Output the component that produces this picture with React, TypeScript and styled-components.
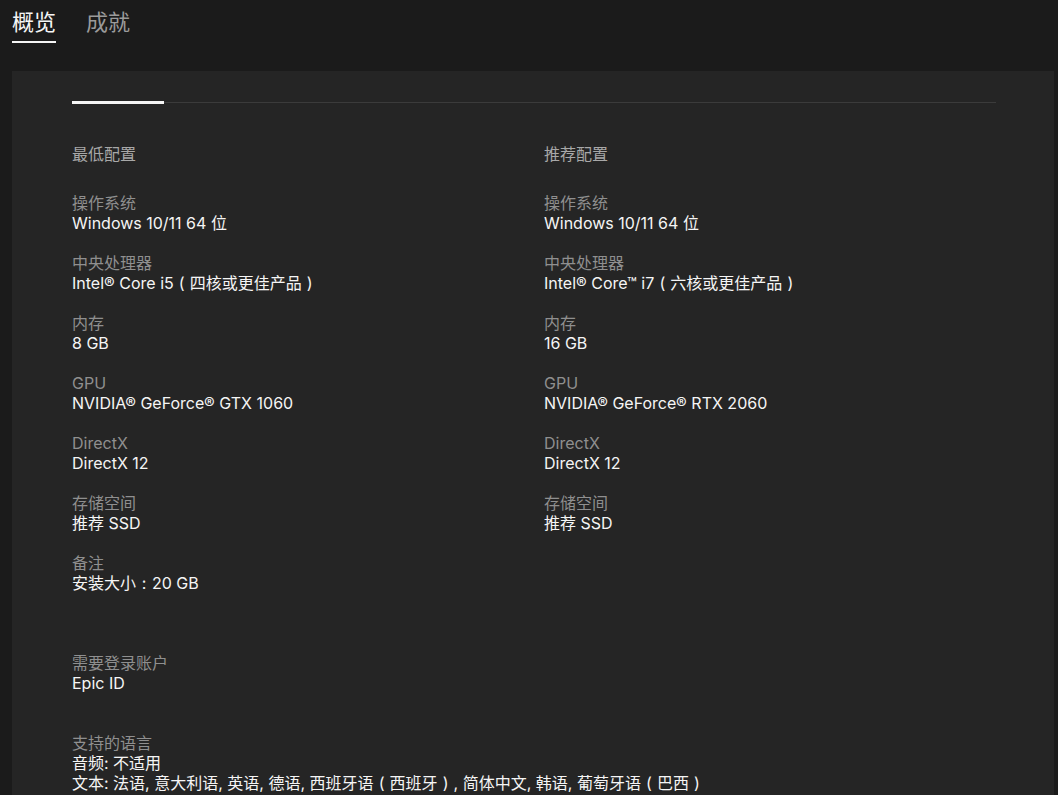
import React from "react";
import styled, { createGlobalStyle } from "styled-components";

type Spec = { label: string; value: React.ReactNode };

// full-width punctuation drawn centred in its em box, as the reference font does
const FW = styled.span`
  display: inline-block;
  width: 1em;
  text-align: center;
`;

const minimum: Spec[] = [
  { label: "操作系统", value: "Windows 10/11 64 位" },
  {
    label: "中央处理器",
    value: (
      <>
        Intel® Core i5<FW>(</FW>四核或更佳产品<FW>)</FW>
      </>
    ),
  },
  { label: "内存", value: "8 GB" },
  { label: "GPU", value: "NVIDIA® GeForce® GTX 1060" },
  { label: "DirectX", value: "DirectX 12" },
  { label: "存储空间", value: "推荐 SSD" },
  {
    label: "备注",
    value: (
      <>
        安装大小<FW>:</FW>20 GB
      </>
    ),
  },
];

const recommended: Spec[] = [
  { label: "操作系统", value: "Windows 10/11 64 位" },
  {
    label: "中央处理器",
    value: (
      <>
        Intel® Core™ i7<FW>(</FW>六核或更佳产品<FW>)</FW>
      </>
    ),
  },
  { label: "内存", value: "16 GB" },
  { label: "GPU", value: "NVIDIA® GeForce® RTX 2060" },
  { label: "DirectX", value: "DirectX 12" },
  { label: "存储空间", value: "推荐 SSD" },
];

const GlobalStyle = createGlobalStyle`
  html, body {
    margin: 0;
    padding: 0;
    background: #1b1b1b;
    font-family: Inter, "Noto Sans CJK SC", sans-serif;
    overflow: hidden;
  }
`;

const Page = styled.div`
  width: 1058px;
  height: 795px;
  overflow: hidden;
  background: #1b1b1b;
`;

const TabBar = styled.nav`
  display: flex;
  gap: 30px;
  padding-left: 12px;
  height: 43px;
`;

const Tab = styled.div<{ $active?: boolean }>`
  padding-top: 8px;
  font-size: 22px;
  line-height: 28px;
  height: 33px;
  color: ${({ $active }) => ($active ? "#f5f5f5" : "#9a9a9a")};
  border-bottom: 2px solid ${({ $active }) => ($active ? "#f5f5f5" : "transparent")};
`;

const Panel = styled.section`
  margin: 28px 4px 0 12px;
  padding: 30px 58px 0 60px;
  background: #252525;
  height: 700px;
`;

const Divider = styled.div`
  position: relative;
  height: 3px;
  display: flex;
  align-items: center;
`;

const Track = styled.div`
  flex: 1;
  height: 1px;
  background: #3b3b3b;
`;

const Indicator = styled.div`
  position: absolute;
  left: 0;
  top: 0;
  width: 92px;
  height: 3px;
  background: #f5f5f5;
`;

const Columns = styled.div`
  display: grid;
  grid-template-columns: 1fr 1fr;
  column-gap: 20px;
  margin-top: 40px;
`;

const Column = styled.div`
  display: flex;
  flex-direction: column;
  gap: 20px;
`;

const Heading = styled.div`
  font-size: 16px;
  line-height: 20px;
  color: #a8a8a8;
  margin-bottom: 9px;
`;

const Item = styled.div`
  display: flex;
  flex-direction: column;
`;

const Label = styled.div`
  font-size: 16px;
  line-height: 20px;
  color: #8f8f8f;
`;

const Value = styled.div`
  font-size: 16px;
  line-height: 20px;
  color: #f5f5f5;
  white-space: nowrap;
`;

const Block = styled(Item)<{ $gap: number }>`
  margin-top: ${({ $gap }) => $gap}px;
`;

function SpecColumn({ title, specs }: { title: string; specs: Spec[] }) {
  return (
    <Column>
      <Heading>{title}</Heading>
      {specs.map((s, i) => (
        <Item key={`spec-${i}`}>
          <Label>{s.label}</Label>
          <Value>{s.value}</Value>
        </Item>
      ))}
    </Column>
  );
}

export default function App() {
  return (
    <Page>
      <GlobalStyle />
      <TabBar>
        <Tab $active>概览</Tab>
        <Tab>成就</Tab>
      </TabBar>
      <Panel>
        <Divider>
          <Track />
          <Indicator />
        </Divider>
        <Columns>
          <SpecColumn title="最低配置" specs={minimum} />
          <SpecColumn title="推荐配置" specs={recommended} />
        </Columns>
        <Block $gap={60}>
          <Label>需要登录账户</Label>
          <Value>Epic ID</Value>
        </Block>
        <Block $gap={40}>
          <Label>支持的语言</Label>
          <Value>音频: 不适用</Value>
          <Value>
            文本: 法语, 意大利语, 英语, 德语, 西班牙语<FW>(</FW>西班牙<FW>)</FW>, 简体中文, 韩语,
            葡萄牙语<FW>(</FW>巴西<FW>)</FW>
          </Value>
        </Block>
      </Panel>
    </Page>
  );
}
